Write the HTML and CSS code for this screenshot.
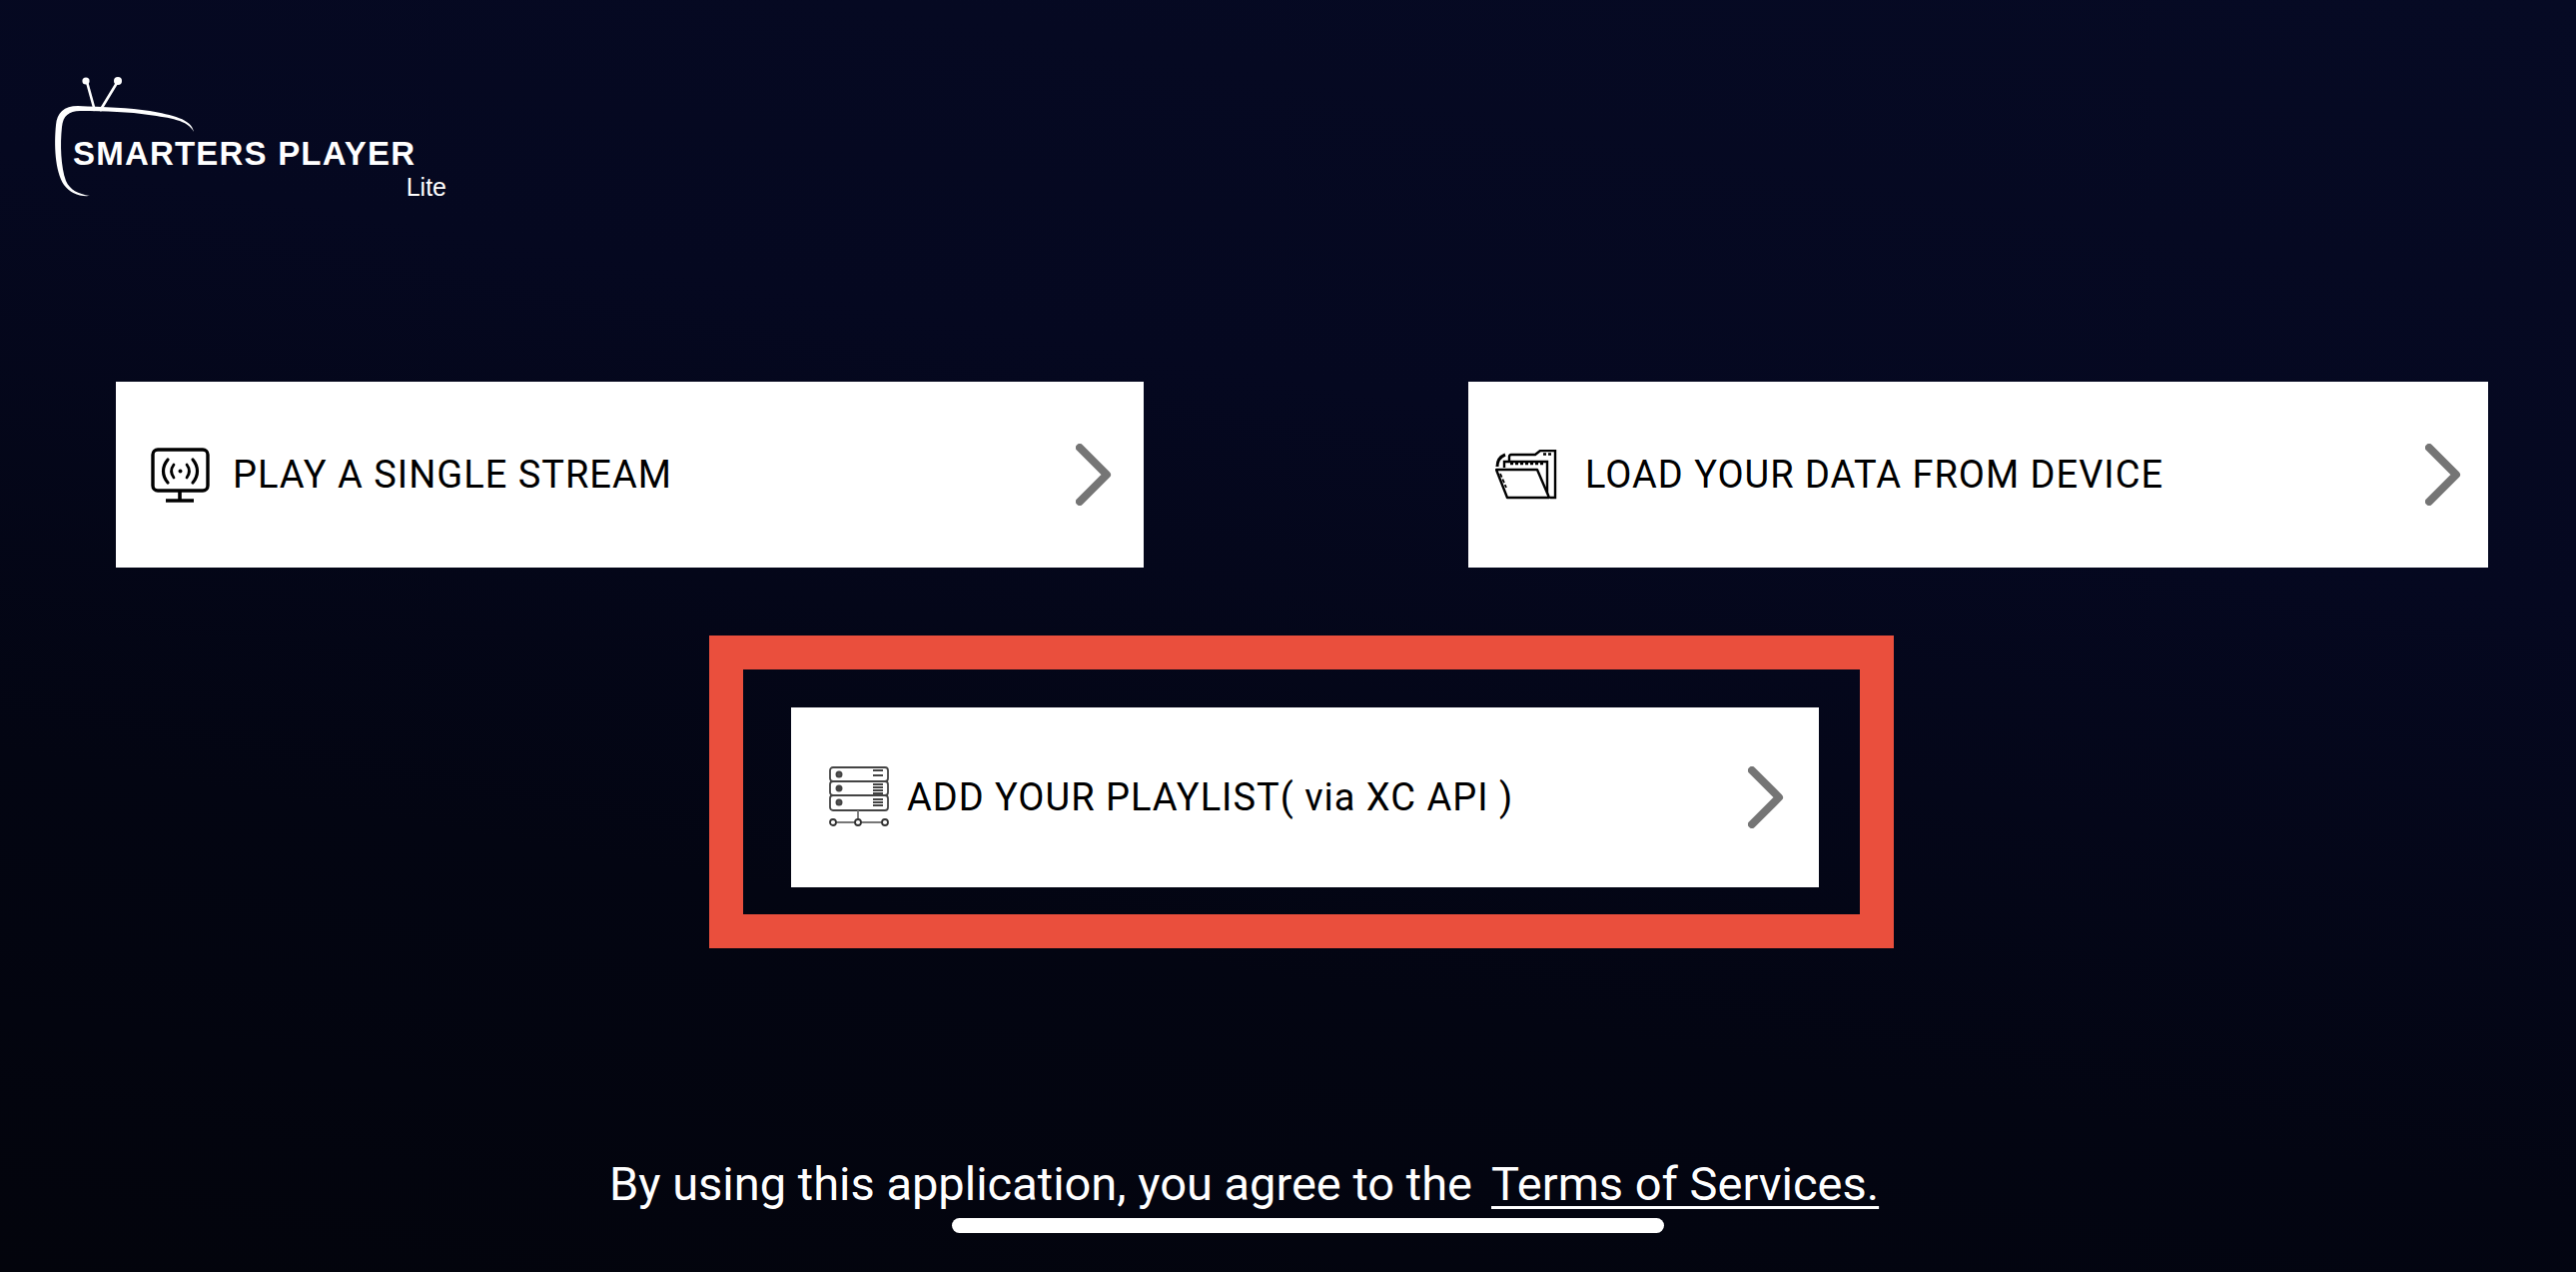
FILE: index.html
```html
<!DOCTYPE html>
<html lang="en">

<head>
    <meta charset="UTF-8">
    <meta name="viewport" content="width=device-width, initial-scale=1.0">
    <title>Smarters Player Lite</title>
    <link rel="stylesheet" href="styles.css">
</head>

<body>
    <div class="screen">
        <div class="logo">
            <svg class="logo-tv" width="140" height="120" viewBox="0 0 140 120" fill="none">
                <path d="M41 38 L33 9 M46 38 L63 10" stroke="#fff" stroke-width="2.6" />
                <circle cx="32" cy="8" r="3.6" fill="#fff" />
                <circle cx="64" cy="8" r="4" fill="#fff" />
                <path fill="#fff" d="M140 59 C138 46 118 42 96 38 C76 35 50 34 24 33 C10 33 3 40 2 52 C0 72 1 98 10 112 C16 120 25 124 36 123 C24 121 16 117 12 108 C7 94 6 72 8 54 C9 43 15 38 26 38 C52 38 76 39 95 42 C116 45 134 47 140 59 Z" />
            </svg>
            <div class="logo-name">SMARTERS PLAYER</div>
            <div class="logo-lite">Lite</div>
        </div>

        <div class="top-row">
            <div class="card card-stream">
                <svg class="icon" width="60" height="56" viewBox="0 0 60 56" fill="none" stroke="#000">
                    <rect x="3" y="3" width="55" height="41" rx="5" stroke-width="3.4" />
                    <path d="M30 45 V53 M16 54 H44" stroke-width="3.6" />
                    <path d="M18 13 C12 20 12 29 18 36 M43 13 C49 20 49 29 43 36" stroke-width="3.2" stroke-linecap="round" />
                    <path d="M24 18 C21 22 21 27 24 31 M37 18 C40 22 40 27 37 31" stroke-width="2.8" stroke-linecap="round" />
                    <circle cx="30.5" cy="24.5" r="2" fill="#000" stroke="none" />
                </svg>
                <span class="card-label">PLAY A SINGLE STREAM</span>
                <svg class="chevron" width="36" height="62" viewBox="0 0 36 62" fill="none">
                    <path d="M4 4 L31 31 L4 58" stroke="#757575" stroke-width="8" stroke-linecap="round" stroke-linejoin="round" />
                </svg>
            </div>

            <div class="card card-device">
                <svg class="icon" width="62" height="50" viewBox="0 0 62 50" fill="none" stroke="#000" stroke-width="2.4">
                    <path d="M2 17 C2 11 5 7 10 5" stroke-width="3" />
                    <path d="M14 13 V7 Q14 5 16 5 H40 L45 1 H60 V48 H55" />
                    <path d="M9 18 V12 H52 V46" />
                    <path d="M15 14 H50 M48 4.500 H57" stroke-dasharray="3 2" />
                    <path d="M1 20 H42 L54 48 H12 Z" fill="#fff" stroke-linejoin="round" />
                    <path d="M5 24 L11 38" stroke-dasharray="4 2" stroke-width="1.800" />
                </svg>
                <span class="card-label">LOAD YOUR DATA FROM DEVICE</span>
                <svg class="chevron" width="36" height="62" viewBox="0 0 36 62" fill="none">
                    <path d="M4 4 L31 31 L4 58" stroke="#757575" stroke-width="8" stroke-linecap="round" stroke-linejoin="round" />
                </svg>
            </div>
        </div>

        <div class="highlight">
            <div class="card card-playlist">
                <svg class="icon" width="60" height="62" viewBox="0 0 60 62" fill="none" stroke="#444" stroke-width="1.800">
                    <rect x="1" y="1" width="58" height="14" rx="3" />
                    <rect x="1" y="15" width="58" height="14" rx="3" />
                    <rect x="1" y="29" width="58" height="15" rx="3" />
                    <circle cx="10" cy="8" r="2.6" fill="#555" />
                    <circle cx="10" cy="22" r="2.6" fill="#444" />
                    <circle cx="10" cy="36" r="2.6" fill="#555" />
                    <path d="M44 4 H54 M44 9 H54 M44 18 H54 M44 21 H54 M44 24 H54 M44 27 H54 M44 33 H54 M44 36 H54 M44 39 H54" />
                    <path d="M29 44 V56 M6 56 H54" stroke="#777" />
                    <circle cx="4" cy="56" r="3" stroke="#333" fill="#fff" />
                    <circle cx="29" cy="56" r="3" stroke="#333" fill="#fff" />
                    <circle cx="56" cy="56" r="3" stroke="#333" fill="#fff" />
                </svg>
                <span class="card-label">ADD YOUR PLAYLIST( via XC API )</span>
                <svg class="chevron" width="36" height="62" viewBox="0 0 36 62" fill="none">
                    <path d="M4 4 L31 31 L4 58" stroke="#757575" stroke-width="8" stroke-linecap="round" stroke-linejoin="round" />
                </svg>
            </div>
        </div>

        <div class="terms">
            <span>By using this application, you agree to the</span>
            <span class="terms-link">Terms of Services.</span>
        </div>
        <div class="home-bar"></div>
    </div>
</body>

</html>
```

FILE: styles.css
```css
html,
body {
    margin: 0;
    background: #04061a;
}

.screen {
    width: 2579px;
    height: 1273px;
    overflow: hidden;
    display: flex;
    flex-direction: column;
    background: linear-gradient(190deg, #060a24 0%, #050820 35%, #030512 70%, #03040c 100%);
    font-family: Roboto, "Liberation Sans", sans-serif;
}

.logo {
    position: relative;
    height: 130px;
    margin: 73px 0 0 54px;
    padding: 62px 0 0 19px;
    box-sizing: border-box;
    color: white;
    font-family: "Liberation Sans", sans-serif;
}

.logo-tv {
    position: absolute;
    left: 0;
    top: 0;
    overflow: visible;
}

.logo-name {
    position: relative;
    width: 380px;
    font-size: 33px;
    font-weight: bold;
    line-height: 38px;
    letter-spacing: 1.2px;
    white-space: nowrap;
}

.logo-lite {
    width: 374px;
    text-align: right;
    font-size: 25px;
    line-height: 28px;
}

.top-row {
    display: flex;
    gap: 325px;
    margin: 179px 0 0 116px;
}

.card {
    display: flex;
    align-items: center;
    height: 186px;
    box-sizing: border-box;
    background: white;
}

.card-stream {
    width: 1029px;
    padding: 0 32px 0 34px;
}

.card-device {
    width: 1021px;
    padding: 0 27px;
}

.card-playlist {
    width: 1029px;
    height: 180px;
    padding: 0 35px 0 38px;
}

.card-label {
    color: #000;
    font-size: 38px;
    letter-spacing: 1px;
    white-space: nowrap;
}

.card-stream .card-label {
    margin-left: 23px;
}

.card-device .card-label {
    margin-left: 28px;
}

.card-playlist .card-label {
    margin-left: 18px;
}

.chevron {
    margin-left: auto;
    flex-shrink: 0;
}

.highlight {
    align-self: flex-start;
    margin: 68px 0 0 710px;
    padding: 38px 41px 27px 48px;
    border: 34px solid #ea4f3d;
}

.terms {
    display: flex;
    gap: 19px;
    margin: 208px 0 0 610px;
    color: white;
    font-size: 47px;
    line-height: 56px;
    white-space: nowrap;
}

.terms-link {
    text-decoration: underline;
    text-decoration-thickness: 3px;
    text-underline-offset: 6px;
}

.home-bar {
    width: 713px;
    height: 15px;
    margin: 6px 0 0 953px;
    border-radius: 8px;
    background: white;
}
```
